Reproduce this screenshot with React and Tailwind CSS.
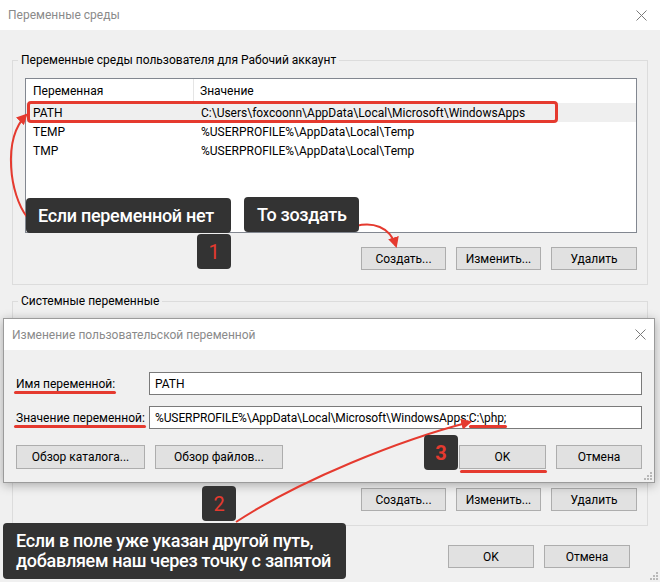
import React from "react";

const userVars = [
  { name: "PATH", value: "C:\\Users\\foxcoonn\\AppData\\Local\\Microsoft\\WindowsApps", active: true },
  { name: "TEMP", value: "%USERPROFILE%\\AppData\\Local\\Temp" },
  { name: "TMP", value: "%USERPROFILE%\\AppData\\Local\\Temp" },
];

function WinButton({ children, className = "" }) {
  return (
    <button
      className={`relative flex h-[23px] items-center justify-center border border-[#adadad] bg-[#e1e1e1] text-[12px] text-black ${className}`}
    >
      {children}
    </button>
  );
}

function CloseX() {
  return (
    <svg width="11" height="11" viewBox="0 0 11 11">
      <path d="M0.5 0.5 L10.5 10.5 M10.5 0.5 L0.5 10.5" stroke="#7a7a7a" strokeWidth="1" />
    </svg>
  );
}

function Grip({ className = "" }) {
  return (
    <svg width="8" height="8" viewBox="0 0 8 8" className={className}>
      {[
        [6, 0],
        [3, 3],
        [6, 3],
        [0, 6],
        [3, 6],
        [6, 6],
      ].map(([x, y]) => (
        <rect key={`${x}-${y}`} x={x} y={y} width="2" height="2" fill="#b8b8b8" />
      ))}
    </svg>
  );
}

// the system list sits under the edit dialog, so only its frame is drawn
function VarList({ rows, header = true }) {
  return (
    <div className="h-[155px] overflow-hidden border border-[#828790] bg-white">
      {header && (
        <div className="flex h-[24px] items-center">
          <div className="flex h-full w-[168px] items-center border-r border-[#e5e5e5] pl-[7px]">Переменная</div>
          <div className="pl-[6px]">Значение</div>
        </div>
      )}
      {rows.map((r) => (
        <div key={r.name} className={`flex h-[19px] items-center ${r.active ? "bg-[#efefef]" : ""}`}>
          <div className="w-[169px] pl-[7px]">{r.name}</div>
          <div className="whitespace-nowrap pl-[6px]">{r.value}</div>
        </div>
      ))}
    </div>
  );
}

function Group({ title, rows, header, className = "" }) {
  return (
    <fieldset className={`border border-[#dcdcdc] pb-[14px] pl-3 pr-[10px] pt-[10px] ${className}`}>
      <legend className="-ml-[7px] px-[3px] leading-[16px]">{title}</legend>
      <VarList rows={rows} header={header} />
      <div className="mt-[14px] flex justify-end gap-[10px]">
        <WinButton className="w-[85px]">Создать...</WinButton>
        <WinButton className="w-[85px]">Изменить...</WinButton>
        <WinButton className="w-[86px]">Удалить</WinButton>
      </div>
    </fieldset>
  );
}

function Underline({ className = "" }) {
  return <span className={`absolute h-[3px] rounded-full bg-[#e53a2f] ${className}`} />;
}

function EditDialog() {
  return (
    <div className="absolute left-[3px] top-[318px] flex h-[165px] w-[652px] flex-col border border-[#9b9b9b] bg-[#f0f0f0] shadow-[0_2px_10px_rgba(0,0,0,0.3)]">
      <div className="flex h-[31px] items-center justify-between bg-white pl-[8px] pr-[8px]">
        <span className="text-[#8a8a8a]">Изменение пользовательской переменной</span>
        <CloseX />
      </div>
      <div className="px-[12px] pt-[22px]">
        <div className="flex h-[23px] items-center">
          <div className="w-[133px] whitespace-nowrap">
            <span className="relative">
              Имя переменной:
              <Underline className="-left-[2px] -right-[1px] top-[14px]" />
            </span>
          </div>
          <div className="flex h-[23px] flex-1 items-center border border-[#7a7a7a] bg-white pl-[5px]">PATH</div>
        </div>
        <div className="mt-[11px] flex h-[23px] items-center">
          <div className="w-[133px] whitespace-nowrap">
            <span className="relative">
              Значение переменной:
              <Underline className="-left-[2px] -right-[1px] top-[14px]" />
            </span>
          </div>
          <div className="flex h-[23px] flex-1 items-center whitespace-nowrap border border-[#7a7a7a] bg-white pl-[5px] tracking-[-0.1px]">
            %USERPROFILE%\AppData\Local\Microsoft\WindowsApps;
            <span className="relative">
              C:\php;
              <Underline className="left-0 -right-[1px] top-[15px]" />
            </span>
          </div>
        </div>
        <div className="mt-[16px] flex">
          <WinButton className="h-[24px] w-[129px]">Обзор каталога...</WinButton>
          <WinButton className="ml-[10px] h-[24px] w-[128px]">Обзор файлов...</WinButton>
          <WinButton className="ml-auto h-[24px] w-[87px]">
            OK
            <Underline className="-right-[2px] left-0 top-[24px]" />
          </WinButton>
          <WinButton className="ml-[10px] h-[24px] w-[86px]">Отмена</WinButton>
        </div>
      </div>
      <Grip className="absolute bottom-[2px] right-[2px]" />
    </div>
  );
}

function Note({ className = "", children }) {
  return (
    <div
      className={`absolute flex items-center rounded-[4px] bg-[#333333] font-['Roboto',sans-serif] text-[18px] font-medium tracking-[-0.3px] text-white ${className}`}
    >
      {children}
    </div>
  );
}

function Badge({ n, className = "" }) {
  return (
    <div
      className={`absolute flex h-[35px] w-[34px] items-center justify-center rounded-[4px] bg-[#333333] font-['Roboto',sans-serif] text-[20px] text-[#e53a2f] ${className}`}
    >
      {n}
    </div>
  );
}

export default function App() {
  return (
    <div className="relative h-[582px] w-[660px] overflow-hidden bg-[#f0f0f0] font-['Roboto',sans-serif] text-[12px] leading-[16px] text-black">
      <div className="flex h-[30px] items-center justify-between bg-white pl-2 pr-[13px]">
        <span className="text-[#8a8a8a]">Переменные среды</span>
        <CloseX />
      </div>

      <div className="pl-3 pr-[12px] pt-[22px]">
        <Group title="Переменные среды пользователя для Рабочий аккаунт" rows={userVars} />
        <Group title="Системные переменные" rows={[]} header={false} className="mt-[8px]" />
        <div className="mt-[19px] flex justify-end gap-[10px] pr-[18px]">
          <WinButton className="w-[86px]">OK</WinButton>
          <WinButton className="w-[86px]">Отмена</WinButton>
        </div>
      </div>
      <Grip className="absolute bottom-[2px] right-[2px]" />

      <EditDialog />

      {/* annotations */}
      <div className="pointer-events-none absolute left-[27px] top-[101px] h-[22px] w-[531px] rounded-[4px] border-[3px] border-[#e53a2f]" />

      <svg className="pointer-events-none absolute left-0 top-0" width="660" height="582" viewBox="0 0 660 582">
        <defs>
          <marker
            id="ah"
            viewBox="0 0 10 10"
            refX="8"
            refY="5"
            markerWidth="11"
            markerHeight="11"
            markerUnits="userSpaceOnUse"
            orient="auto"
          >
            <path d="M0 0 L10 5 L0 10 Z" fill="#e53a2f" />
          </marker>
        </defs>
        <path d="M27 217 C10 195 2 140 26 115" fill="none" stroke="#e53a2f" strokeWidth="2" markerEnd="url(#ah)" />
        <path d="M356 226 C372 222 390 226 396 246" fill="none" stroke="#e53a2f" strokeWidth="2" markerEnd="url(#ah)" />
        <path d="M236 522 C300 480 400 440 470 422" fill="none" stroke="#e53a2f" strokeWidth="2" markerEnd="url(#ah)" />
      </svg>

      <Note className="left-[26px] top-[198px] h-[35px] w-[205px] pl-[12px]">Если переменной нет</Note>
      <Note className="left-[244px] top-[197px] h-[35px] w-[115px] pl-[13px]">То зоздать</Note>
      <Badge n="1" className="left-[197px] top-[234px]" />
      <Badge n="3" className="left-[424px] top-[435px] font-bold" />
      <Badge n="2" className="left-[202px] top-[486px]" />
      <Note className="left-[3px] top-[523px] h-[56px] w-[343px] flex-col items-start justify-center pl-[13px] leading-[20px]">
        <span>Если в поле уже указан другой путь,</span>
        <span>добавляем наш через точку с запятой</span>
      </Note>
    </div>
  );
}
